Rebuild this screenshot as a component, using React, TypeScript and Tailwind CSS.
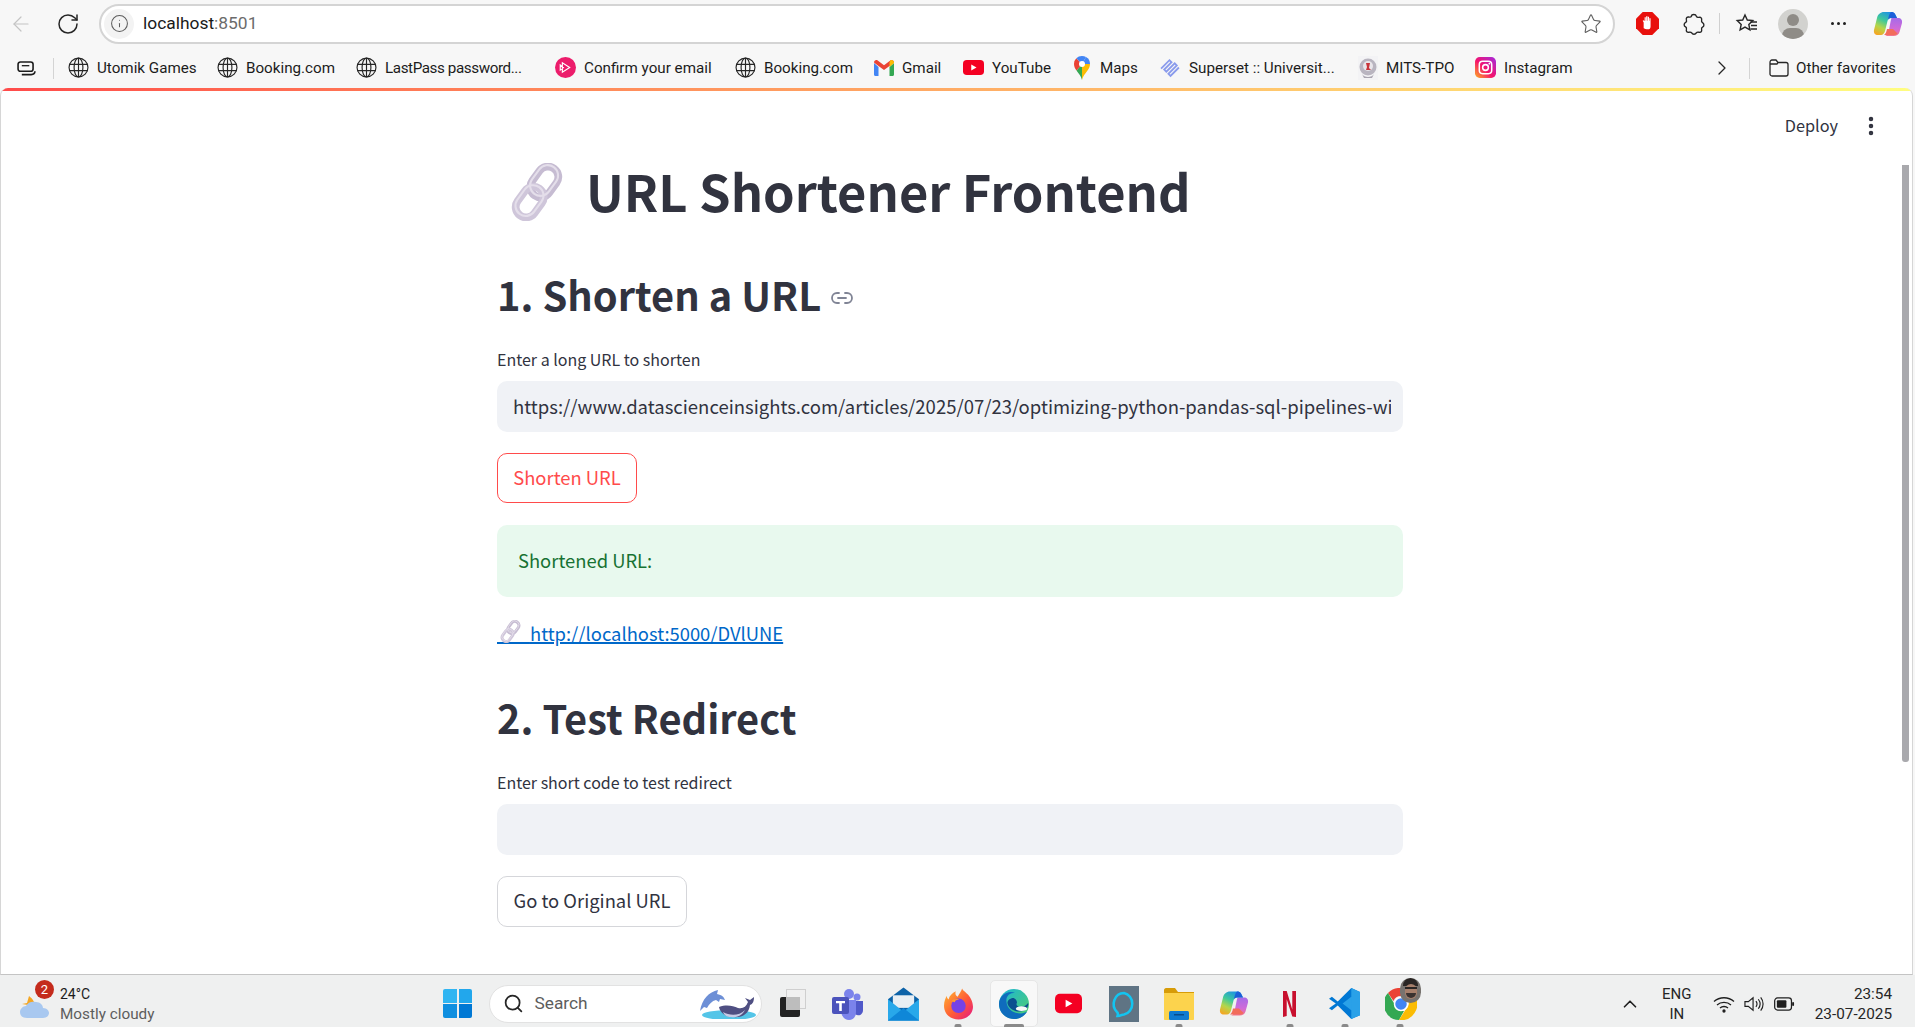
import React from "react";
import { ArrowLeft, RotateCw, Info, Star, MoreVertical, ChevronRight, ChevronUp, Search, Link2 } from "lucide-react";

const ChainEmoji = ({ className }: { className: string }) => (
  <svg viewBox="0 0 56 56" className={`inline-block ${className}`} fill="none">
    <g transform="rotate(36 28 28)">
      <rect x="18" y="0" width="20" height="32" rx="10" stroke="#c6bcd2" strokeWidth="7.500" />
      <rect x="18" y="24" width="20" height="32" rx="10" stroke="#cfc6da" strokeWidth="7.500" />
      <rect x="17" y="-1" width="20" height="32" rx="10" stroke="#e4deea" strokeWidth="2" />
      <rect x="17" y="23" width="20" height="32" rx="10" stroke="#e4deea" strokeWidth="2" />
    </g>
  </svg>
);

const Globe = () => (
  <svg viewBox="0 0 20 20" className="w-[21px] h-[21px]" fill="none" stroke="#262626" strokeWidth="1.1">
    <circle cx="10" cy="10" r="9" />
    <ellipse cx="10" cy="10" rx="4.2" ry="9" />
    <path d="M10 1v18M1.2 7h17.6M1.2 13h17.6" />
  </svg>
);

const Pluralsight = () => (
  <svg viewBox="0 0 20 20" className="w-[21px] h-[21px]">
    <circle cx="10" cy="10" r="10" fill="#ec1c6b" />
    <path d="M7 5.500v9l7-4.500zM5 7.500v5l3-2.500z" fill="none" stroke="#fff" strokeWidth="1.1" />
  </svg>
);
const Gmail = () => (
  <svg viewBox="0 0 20 16" className="w-[20px] h-[16px]">
    <path d="M0 3v11.500c0 .8.6 1.500 1.400 1.500H4.500V7z" fill="#4285f4" />
    <path d="M15.500 7v9h3.100c.8 0 1.400-.7 1.400-1.500V3z" fill="#34a853" />
    <path d="M0 2.500 4.500 6 10 10l5.500-4 4.500-3.500C20 .5 17.800-.6 16.300.6L10 5.300 3.700.6C2.200-.6 0 .5 0 2.500z" fill="#ea4335" />
    <path d="M15.500 7V2.600l.8-2C17.800-.6 20 .5 20 2.500V3z" fill="#fbbc04" />
  </svg>
);
const YouTubeIcon = ({ className }: { className: string }) => (
  <svg viewBox="0 0 28 20" className={className}>
    <rect width="28" height="20" rx="5" fill="#f40022" />
    <path d="M11 6v8l7-4z" fill="#fff" />
  </svg>
);
const MapsPin = () => (
  <svg viewBox="0 0 16 24" className="w-[16px] h-[24px]">
    <path d="M8 24c-1-4-3-6-5.500-9.500L8 8z" fill="#34a853" />
    <path d="M8 24c1-4 3-6 5.500-9.500C15 12.500 16 10.500 16 8L8 8z" fill="#fbbc04" />
    <path d="M2.300 2.300A8 8 0 0 0 0 8c0 2.500 1 4.500 2.500 6.500L8 8z" fill="#ea4335" />
    <path d="M2.300 2.300A8 8 0 0 1 8 0c1.500 0 2.800.4 4 1L8 8z" fill="#4285f4" />
    <path d="M12 1a8 8 0 0 1 4 7H8z" fill="#4285f4" />
    <circle cx="8" cy="8" r="3" fill="#fff" />
  </svg>
);
const Superset = () => (
  <svg viewBox="0 0 20 20" className="w-[21px] h-[21px]" fill="none" stroke="#8a9bec" strokeWidth="1.700">
    <path d="M1 11 9 3l2 2-7 7 2 2 8-8 2 2-8 8 2 2 8-8" />
  </svg>
);
const Mits = () => (
  <svg viewBox="0 0 20 24" className="w-[20px] h-[24px]">
    <rect width="20" height="24" fill="#f3f3f5" />
    <circle cx="10" cy="11" r="8.500" fill="#b9b5c0" />
    <path d="M4 18c2 4 10 4 12 0l-2 4H6z" fill="#a8a4b0" />
    <circle cx="10" cy="10" r="5" fill="#e9e6ea" />
    <path d="M8 7h4l-1 5 2 2H8l1-3z" fill="#c8343a" />
  </svg>
);
const Instagram = () => (
  <svg viewBox="0 0 22 22" className="w-[21px] h-[21px]">
    <defs>
      <linearGradient id="ig" x1="0" y1="1" x2="1" y2="0">
        <stop offset="0" stopColor="#fdb022" />
        <stop offset=".45" stopColor="#f5136d" />
        <stop offset="1" stopColor="#a12be0" />
      </linearGradient>
    </defs>
    <rect width="22" height="22" rx="5" fill="url(#ig)" />
    <rect x="4.500" y="4.500" width="13" height="13" rx="3.500" fill="none" stroke="#fff" strokeWidth="1.600" />
    <circle cx="11" cy="11" r="3" fill="none" stroke="#fff" strokeWidth="1.600" />
    <circle cx="15" cy="7" r=".9" fill="#fff" />
  </svg>
);

const bookmarks = [
  { label: "Utomik Games", icon: <Globe />, cls: "w-[149px]", text: "" },
  { label: "Booking.com", icon: <Globe />, cls: "w-[139px]", text: "" },
  { label: "LastPass password...", icon: <Globe />, cls: "w-[199px]", text: "tracking-[-0.400px]" },
  { label: "Confirm your email", icon: <Pluralsight />, cls: "w-[180px]", text: "" },
  { label: "Booking.com", icon: <Globe />, cls: "w-[138px]", text: "" },
  { label: "Gmail", icon: <Gmail />, cls: "w-[90px]", text: "" },
  { label: "YouTube", icon: <YouTubeIcon className="w-[21px] h-[15px]" />, cls: "w-[108px]", text: "" },
  { label: "Maps", icon: <MapsPin />, cls: "w-[89px]", text: "" },
  { label: "Superset :: Universit...", icon: <Superset />, cls: "w-[197px]", text: "" },
  { label: "MITS-TPO", icon: <Mits />, cls: "w-[118px]", text: "" },
  { label: "Instagram", icon: <Instagram />, cls: "w-[90px]", text: "" },
];

const Copilot = ({ className, id }: { className: string; id: string }) => (
  <svg viewBox="0 0 30 30" className={className}>
    <defs>
      <linearGradient id={`${id}a`} x1="0.7" y1="0" x2="0.2" y2="1">
        <stop offset="0" stopColor="#1b8fe8" />
        <stop offset=".4" stopColor="#3fc99a" />
        <stop offset=".7" stopColor="#b5d64a" />
        <stop offset="1" stopColor="#f5a623" />
      </linearGradient>
      <linearGradient id={`${id}b`} x1="0.5" y1="0" x2="0.5" y2="1">
        <stop offset="0" stopColor="#a56be8" />
        <stop offset=".6" stopColor="#d06ad8" />
        <stop offset="1" stopColor="#f5768a" />
      </linearGradient>
    </defs>
    <path d="M11 3h7c2 0 3 .5 4 2l2 4h-6c-2 0-3 1-3.500 3L12 22c-.5 2-2 4-4 4H5c-3 0-4.500-2-4-5l3-12c.7-3.500 3.500-6 7-6z" fill={`url(#${id}a)`} />
    <path d="M18 9h7c3 0 4.500 2 4 5l-2.500 9c-.7 2.500-3 4-6 4h-9c2 0 3.500-2 4-4l2-10c.4-2.500 1.500-4 .5-4z" fill={`url(#${id}b)`} />
    <path d="M11 26h9c2 0 3.500-.5 4.500-1.500L20 20h-6c-.5 3-1.500 5-3 6z" fill="#f26d5b" />
    <path d="M18 3c2 0 3 .5 4 2l2 4h-6c-1.500 0-2.500 1-3 2 .5-3 1-6 3-8z" fill="#1c5fd8" />
  </svg>
);

const Teams = () => (
  <svg viewBox="0 0 32 32" className="w-[32px] h-[32px]">
    <circle cx="25" cy="9" r="3.500" fill="#7b83eb" />
    <circle cx="17" cy="6" r="5" fill="#7b83eb" />
    <path d="M21 13h10v9c0 4-3 6-6 5-2-.5-4-2-4-5z" fill="#5059c9" />
    <path d="M9 12h15v12c0 5-3 8-7 8s-7-3-8-8z" fill="#7b83eb" />
    <rect x="0" y="9" width="17" height="17" rx="2" fill="#4b53bc" />
    <path d="M4 13h9v2.200H9.800V23H7.200v-7.800H4z" fill="#fff" />
  </svg>
);
const Mail = () => (
  <svg viewBox="0 0 32 34" className="w-[31px] h-[34px]">
    <path d="M16 0 32 12v22H0V12z" fill="#0b62a8" />
    <path d="M5 8h22v13H5z" fill="#e8eef3" />
    <path d="M0 12 16 25 32 12v22H0z" fill="#28a8ea" />
    <path d="M0 34 16 21l16 13z" fill="#0f87d8" />
  </svg>
);
const Firefox = () => (
  <svg viewBox="0 0 32 34" className="w-[29px] h-[32px]">
    <defs>
      <linearGradient id="ff" x1="0" y1="0" x2="1" y2="1">
        <stop offset="0" stopColor="#ffbd2e" />
        <stop offset=".55" stopColor="#ff5a36" />
        <stop offset="1" stopColor="#e31587" />
      </linearGradient>
    </defs>
    <path d="M20 0c1 3 6 5 9 10 3 5 3 10 3 10 0 8-7 14-16 14S0 28 0 19c0-5 2-9 3-11 0 2 1 3 2 4 1-4 4-7 8-9-1 3 0 5 2 6 2-3 4-6 5-9z" fill="url(#ff)" />
    <circle cx="16" cy="19" r="8" fill="#7542e5" />
    <path d="M8 14c2-2 5-3 9-2-3 0-5 1-5 3z" fill="#ff9a2e" />
  </svg>
);
const Edge = () => (
  <svg viewBox="0 0 32 32" className="w-[30px] h-[30px]">
    <defs>
      <linearGradient id="ed" x1="0" y1="0" x2="1" y2="1">
        <stop offset="0" stopColor="#19b5d8" />
        <stop offset="1" stopColor="#54cf6b" />
      </linearGradient>
    </defs>
    <circle cx="16" cy="16" r="16" fill="url(#ed)" />
    <path d="M0 16C0 7 9 1 17 4c-6 0-10 4-9 10 .6 7 7 12 15 12 3 0 5-1 7-2-3 5-8 8-14 8C7 32 0 25 0 16z" fill="#0f6cbd" />
    <path d="M9 15c1 5 6 9 12 9 4 0 7-1 9-4 .8-1.500 1.500-3 1-5-2 3-5 4-8 4-3.500 0-5-2-4-4 1-1.500-2-7-6-5-3 1-4 3-4 5z" fill="#0b4f8f" />
    <ellipse cx="24" cy="21" rx="6" ry="2.500" fill="#f8f8f8" />
  </svg>
);
const AlexaIcon = () => (
  <svg viewBox="0 0 30 36" className="w-[30px] h-[36px]">
    <rect width="30" height="36" fill="#5f7484" />
    <path d="M15 7a10.500 11 0 0 0-7 19c1.500 1.300 1 2.500.5 4 4 0 3.500-1.500 6.500-1.500A10.500 11 0 0 0 15 7z" fill="none" stroke="#13c4f0" strokeWidth="2.500" />
  </svg>
);
const Explorer = () => (
  <svg viewBox="0 0 30 32" className="w-[30px] h-[32px]">
    <path d="M0 2c0-1 1-2 2-2h9l3 4h16v6H0z" fill="#d79c08" />
    <path d="M0 5h30v26c0 .6-.4 1-1 1H1c-.6 0-1-.4-1-1z" fill="#fcd34d" />
    <rect x="5" y="23" width="20" height="9" rx="1.500" fill="#0f7bd0" />
    <rect x="10" y="26" width="10" height="1.500" fill="#084c8a" />
  </svg>
);
const Netflix = () => (
  <svg viewBox="0 0 14 28" className="w-[13px] h-[28px]">
    <path d="M0 0h4l6 20V0h4v28l-4-.6L4 9v18l-4 1z" fill="#c8102e" />
  </svg>
);
const VSCode = () => (
  <svg viewBox="0 0 32 32" className="w-[31px] h-[31px]">
    <path d="M23 0 32 4v24l-9 4L9 18l-6 5-3-2 7-5-7-5 3-2 6 5z" fill="#0078d4" />
    <path d="M23 0 32 4v24l-9 4zM23 9l-9 7 9 7z" fill="#2aa1e8" fillRule="evenodd" />
  </svg>
);
const Chrome = () => (
  <div className="relative w-[30px] h-[36px]">
    <svg viewBox="0 0 32 32" className="absolute left-0 top-[2px] w-[32px] h-[32px]">
      <path d="M16 0a16 16 0 0 1 14 8H16a8 8 0 0 0-7.500 5L3 5A16 16 0 0 1 16 0z" fill="#ea4335" />
      <path d="M3 5l7 12a8 8 0 0 0 9 6l-5 9A16 16 0 0 1 3 5z" fill="#34a853" />
      <path d="M30 8a16 16 0 0 1-16 24l7-11a8 8 0 0 0-1-13z" fill="#fbbc04" />
      <circle cx="16" cy="16" r="6.500" fill="#4285f4" stroke="#fff" strokeWidth="1.500" />
    </svg>
    <div className="absolute left-[15px] top-[-8px] w-[21px] h-[25px] rounded-full bg-[#77736f] overflow-hidden">
      <div className="absolute left-[3px] top-0 w-[15px] h-[8px] rounded-t-full bg-[#2a2624]" />
      <div className="absolute left-[5px] top-[6px] w-[12px] h-[15px] rounded-full bg-[#a67f6b]" />
      <div className="absolute left-[5px] top-[9px] w-[12px] h-[2px] bg-[#2a2624]" />
      <div className="absolute left-[6px] top-[15px] w-[10px] h-[5px] rounded-b-full bg-[#3a3230]" />
    </div>
  </div>
);

const taskIcons = [
  { el: <Teams />, dot: "" },
  { el: <Mail />, dot: "" },
  { el: <Firefox />, dot: "w-[7px]" },
  { el: <Edge />, dot: "w-[20px]", active: true },
  { el: <YouTubeIcon className="w-[27px] h-[25px]" />, dot: "" },
  { el: <AlexaIcon />, dot: "" },
  { el: <Explorer />, dot: "w-[7px]" },
  { el: <Copilot id="cpt" className="w-[30px] h-[33px]" />, dot: "" },
  { el: <Netflix />, dot: "w-[7px]" },
  { el: <VSCode />, dot: "w-[7px]" },
  { el: <Chrome />, dot: "w-[7px]" },
];

const Whale = () => (
  <svg viewBox="0 0 58 30" className="w-[58px] h-[30px]">
    <ellipse cx="30" cy="26" rx="27" ry="5" fill="#54c5e8" />
    <path d="M1 22C3 10 10 3 19 1l-1 4c5 1 7 3 8 6l-5-1-1 3-3-2c-4 1-7 4-9 8l-3-1z" fill="#6d8fd6" />
    <path d="M20 18c8-3 14-1 19 1 5 1 8-1 10-6l-3-4 5 2 4-3c0 4-1 7-4 8-1 9-8 13-17 12-7 0-13-4-14-10z" fill="#4f4f82" />
    <path d="M24 23c7 4 16 4 22-2-3 6-9 8-14 7-4 0-7-2-8-5z" fill="#c7cbe6" />
  </svg>
);

const textStyle = "[font-family:'Noto_Sans_CJK_SC','Noto_Sans',sans-serif]";

export default function App() {
  return (
    <div className="h-screen w-full overflow-hidden flex flex-col bg-[#f7f7f7] [font-family:Roboto,sans-serif] text-[#1f1f1f]">
      {/* toolbar */}
      <div className="h-[46px] pt-[1px] flex items-center shrink-0">
        <div className="w-[42px] flex justify-center"><ArrowLeft className="w-[24px] h-[24px] text-[#c4c4c4]" strokeWidth={1.200} /></div>
        <div className="ml-[5px] w-[42px] flex justify-center"><RotateCw className="w-[24px] h-[24px] text-[#262626]" strokeWidth={1.500} /></div>
        <div className="ml-[10px] w-[1516px] h-[40px] rounded-full bg-white border-2 border-[#d4d4d4] flex items-center">
          <div className="ml-[3px] w-[30px] h-[30px] rounded-full bg-[#f3f3f3] flex items-center justify-center"><Info className="w-[19px] h-[19px] text-[#5c5c5c]" strokeWidth={1.300} /></div>
          <span className="ml-[9px] text-[17.400px] text-[#1a1a1a]">localhost<span className="text-[#6b6b6b]">:8501</span></span>
          <div className="ml-auto mr-[11px]"><Star className="w-[22px] h-[22px] text-[#5f5f5f]" strokeWidth={1.200} /></div>
        </div>
        <div className="ml-[19px] w-[26px] h-[26px] flex items-center justify-center">
          <svg viewBox="0 0 24 24" className="w-[23px] h-[23px]">
            <path d="M7 0h10l7 7v10l-7 7H7l-7-7V7z" fill="#e8100c" />
            <path d="M8 17v-6l-1-2 1-.5 1 1V5.500h1.200V9h.4V4.500h1.300V9h.4V5h1.300v4h.4V6.500h1.200V15c0 2-1 3-3 3h-1c-1 0-2-.3-3-1z" fill="#fff" />
          </svg>
        </div>
        <div className="ml-[21px] w-[26px] flex justify-center">
          <svg viewBox="0 0 24 24" className="w-[22px] h-[22px]" fill="none" stroke="#262626" strokeWidth="1.500">
            <path d="M9 3.500c.5-2.500 5-2.500 5.500 0 .2 1 1.500 1.500 3 1.200 2-.4 3.300 1 2.800 3-.3 1.300 0 2.300 1 2.800 2 1 2 4 0 5-1 .5-1.300 1.500-1 2.800.5 2-.8 3.200-2.800 2.700-1.500-.4-2.500 0-3 .7-1 2-4 2-5 0-.5-.7-1.500-1-3-.7-2 .4-3.300-1-2.800-2.800.3-1.500 0-2.500-.8-3-2.200-1-2.200-4 0-5 1-.5 1.200-1.500.8-2.800-.5-2 .8-3.500 2.800-3 1.500.3 2.300 0 2.700-.9z" />
          </svg>
        </div>
        <div className="ml-[12px] w-px h-[21px] bg-[#d0d0d0]" />
        <div className="ml-[14px] w-[26px] flex justify-center">
          <svg viewBox="0 0 24 24" className="w-[24px] h-[24px]" fill="none" stroke="#262626" strokeWidth="1.400">
            <path d="M10 3l2.300 5 5.500.6-4 3.800 1.100 5.500-4.900-2.800-4.900 2.800 1.100-5.500-4-3.800 5.500-.6z" />
            <path d="M15.500 10H22M16 13.500h6M15.500 17H22" />
          </svg>
        </div>
        <div className="ml-[18px] w-[30px] h-[30px] rounded-full bg-[#d2d2cf] relative overflow-hidden">
          <div className="absolute left-[9px] top-[5px] w-[12px] h-[12px] rounded-full bg-[#8f8c87]" />
          <div className="absolute left-[4px] top-[19px] w-[22px] h-[16px] rounded-full bg-[#8f8c87]" />
        </div>
        <div className="ml-[23px] flex gap-[3px]">
          <span className="w-[3px] h-[3px] rounded-full bg-[#1f1f1f]" />
          <span className="w-[3px] h-[3px] rounded-full bg-[#1f1f1f]" />
          <span className="w-[3px] h-[3px] rounded-full bg-[#1f1f1f]" />
        </div>
        <div className="ml-[27px]"><Copilot id="cpb" className="w-[30px] h-[30px]" /></div>
      </div>

      {/* bookmarks */}
      <div className="h-[42px] pt-[2px] flex items-center shrink-0 text-[15.200px] text-[#1c1c1c]">
        <div className="w-[53px] pl-[17px]">
          <svg viewBox="0 0 20 16" className="w-[19px] h-[15px]" fill="none" stroke="#1c1c1c" strokeWidth="1.700">
            <rect x="1" y="1" width="16" height="10" rx="2.500" />
            <path d="M5 14.500h10c2 0 4-1 4-3.500" />
            <path d="M5 5h8" strokeWidth="1.400" />
          </svg>
        </div>
        <div className="w-px h-[21px] bg-[#d4d4d4]" />
        <div className="ml-[14px] flex items-center">
          {bookmarks.map((b, i) => (
            <div key={i} className={`flex items-center gap-[8px] ${b.cls}`}>
              <span className="w-[21px] flex justify-center shrink-0">{b.icon}</span>
              <span className={`whitespace-nowrap ${b.text}`}>{b.label}</span>
            </div>
          ))}
        </div>
        <div className="ml-[145px]"><ChevronRight className="w-[24px] h-[24px] text-[#262626]" strokeWidth={1.300} /></div>
        <div className="ml-[15px] w-px h-[21px] bg-[#d4d4d4]" />
        <div className="ml-[19px] flex items-center gap-[7px]">
          <svg viewBox="0 0 20 18" className="w-[20px] h-[18px]" fill="none" stroke="#262626" strokeWidth="1.300">
            <path d="M1 3.500C1 2 2 1 3 1h4l2 2.500h8c1 0 2 1 2 2V15c0 1-1 2-2 2H3c-1 0-2-1-2-2z" />
            <path d="M1 5h7l1-1.500" />
          </svg>
          <span className="whitespace-nowrap">Other favorites</span>
        </div>
      </div>

      {/* page */}
      <div className="relative flex-1 min-h-0 overflow-hidden mr-[2px] bg-white rounded-t-[8px] border-l border-b border-r border-[#d6d6d6] border-b-[#c4c4c4]">
        <div className="h-[3px] bg-gradient-to-r from-[#ff4b4b] to-[#fffd80]" />
        <div className={`${textStyle} text-[#31333f]`}>
          <div className="h-[70px] flex items-center justify-end pr-[29px] text-[16.300px]">
            <span className="mb-[2px]">Deploy</span>
            <MoreVertical className="ml-[21px] w-[24px] h-[24px] text-[#31333f]" strokeWidth={2.500} />
          </div>
          <div className="ml-[496px] w-[906px]">
            <h1 className="pl-[11px] h-[58px] flex items-center text-[50.600px] font-bold leading-none whitespace-nowrap">
              <ChainEmoji className="mt-[3px] w-[58px] h-[58px]" />
              <span className="ml-[20px]">URL Shortener Frontend</span>
            </h1>
            <h2 className="mt-[48px] h-[54px] flex items-center text-[39.800px] font-semibold leading-none whitespace-nowrap">
              1. Shorten a URL
              <Link2 className="ml-[9px] mt-[7px] w-[24px] h-[24px] text-[#808495]" strokeWidth={1.800} />
            </h2>
            <label className="mt-[27px] block h-[22px] leading-[22px] text-[16px]">Enter a long URL to shorten</label>
            <input
              readOnly
              value="https://www.datascienceinsights.com/articles/2025/07/23/optimizing-python-pandas-sql-pipelines-with-best-practices"
              className="mt-[11px] block w-full h-[51px] rounded-[10px] bg-[#f0f2f6] pl-[16px] pr-[12px] pb-[2px] text-[18.500px] text-[#31333f] outline-none"
            />
            <button className="mt-[21px] block w-[140px] h-[50px] rounded-[10px] border border-[#ff4b4b] bg-white text-[#ff4b4b] text-[18.400px]">Shorten URL</button>
            <div className="mt-[22px] h-[72px] rounded-[10px] bg-[#e8f9ee] pl-[21px] pb-[1px] flex items-center text-[18.400px] text-[#177233]">Shortened URL:</div>
            <div className="mt-[21px] h-[30px] leading-[30px] text-[18.400px] whitespace-nowrap">
              <a href="#" className="relative underline decoration-[1.500px] text-[#0068c9]">
                {"\u00A0\u00A0\u00A0\u00A0\u00A0\u00A0\u00A0 "}http://localhost:5000/DVlUNE
                <ChainEmoji className="absolute left-[2px] top-[0px] w-[23px] h-[23px]" />
              </a>
            </div>
            <h2 className="mt-[42px] h-[54px] flex items-center text-[39.800px] font-semibold leading-none whitespace-nowrap">2. Test Redirect</h2>
            <label className="mt-[27px] block h-[22px] leading-[22px] text-[16px]">Enter short code to test redirect</label>
            <div className="mt-[11px] w-full h-[51px] rounded-[10px] bg-[#f0f2f6]" />
            <button className="mt-[21px] block w-[190px] h-[51px] rounded-[10px] border border-[#d5d6da] bg-white text-[#31333f] text-[18.400px] pb-[1px]">Go to Original URL</button>
          </div>
        </div>
        <div className="absolute right-[3px] top-[77px] w-[7px] h-[597px] rounded-b-[3px] bg-[#a9a9ad]" />
      </div>

      {/* taskbar */}
      <div className="h-[52px] pt-[5px] shrink-0 bg-[#eff0f0] flex items-center relative text-[15px]">
        <div className="ml-[19px] w-[34px] h-[34px] relative">
          <svg viewBox="0 0 34 34" className="w-[34px] h-[34px]">
            <path d="M3 17l5-1 2-7c4 3 6 6 5 10z" fill="#f4a623" />
            <path d="M8 31c-5 0-7-3-7-6s3-6 6-6c2-4 6-5 10-4 4 0 7 3 7 6 4 0 6 3 6 5 0 3-3 5-6 5z" fill="#a8c8f0" />
          </svg>
          <div className="absolute left-[16px] top-[-7px] w-[19px] h-[19px] rounded-full bg-[#c42b1c] text-white text-[13px] leading-[19px] text-center">2</div>
        </div>
        <div className="ml-[7px] flex flex-col leading-[20px]">
          <span className="text-[14px] text-[#1c1c1c]">24°C</span>
          <span className="text-[15.300px] text-[#5d5d5d]">Mostly cloudy</span>
        </div>
        <div className="ml-[289px] grid grid-cols-2 gap-[1.500px] w-[29px] h-[29px]">
          <span className="bg-[#30b5f2] rounded-tl-[2px]" />
          <span className="bg-[#22a7ec] rounded-tr-[2px]" />
          <span className="bg-[#0f8fe0] rounded-bl-[2px]" />
          <span className="bg-[#0078d4] rounded-br-[2px]" />
        </div>
        <div className="ml-[17px] w-[273px] h-[38px] rounded-full bg-white border border-[#e2e2e2] flex items-center relative">
          <Search className="ml-[13px] w-[21px] h-[21px] text-[#262626]" strokeWidth={2} />
          <span className="ml-[10px] mt-[1px] text-[17.300px] text-[#5d5d5d]">Search</span>
          <div className="ml-auto mr-[4px]"><Whale /></div>
        </div>
        <div className="ml-[18px] w-[26px] h-[24px] relative mt-[3px]">
          <div className="absolute left-[6px] top-[-4px] w-[20px] h-[20px] bg-[#f0f0f0] border border-[#cfcfcf]" />
          <div className="absolute left-0 top-[4px] w-[20px] h-[20px] bg-[#222] rounded-[2px]" />
          <div className="absolute left-[6px] top-[4px] w-[14px] h-[13px] bg-[#bdbdbd]" />
        </div>
        <div className="ml-[14px] flex items-center -mt-[5px]">
          {taskIcons.map((t, i) => (
            <div key={i} className="relative w-[55.200px] h-[52px] flex items-center justify-center">
              {t.active && <span className="absolute left-[3.500px] right-[3.500px] top-[5px] bottom-0 rounded-[5px] bg-[#f8f8f8] border border-[#e6e6e6]" />}
              <span className="relative mt-[5px] flex items-center justify-center">{t.el}</span>
              {t.dot && <span className={`absolute bottom-0 left-1/2 -translate-x-1/2 h-[3px] rounded-t-[2px] bg-[#8a8a8a] ${t.dot}`} />}
            </div>
          ))}
        </div>
        <div className="ml-auto flex items-center">
          <ChevronUp className="w-[22px] h-[22px] text-[#1f1f1f]" strokeWidth={1.800} />
          <div className="ml-[11px] w-[50px] flex flex-col items-center leading-[20px] text-[15px] text-[#262626]"><span>ENG</span><span>IN</span></div>
          <svg viewBox="0 0 22 18" className="ml-[11px] w-[22px] h-[18px]" fill="none" stroke="#1f1f1f" strokeWidth="1.300">
            <path d="M1 6.500c5.500-5 14.500-5 20 0M4 10c3.800-3.500 10.200-3.500 14 0M7 13c2.200-2 5.800-2 8 0" />
            <circle cx="11" cy="16" r="1" fill="#1f1f1f" />
          </svg>
          <svg viewBox="0 0 22 18" className="ml-[9px] w-[21px] h-[18px]" fill="none" stroke="#1f1f1f" strokeWidth="1.200">
            <path d="M1 6.500h3.500L9.500 2.500v13l-5-4H1zM12.500 6c1.300 1.700 1.300 4.300 0 6M15 4c2.300 3 2.300 7 0 10M17.500 2c3.300 4 3.300 10 0 14" />
          </svg>
          <svg viewBox="0 0 22 14" className="ml-[9px] w-[21px] h-[14px]">
            <rect x=".7" y=".7" width="17.600" height="12.600" rx="3" fill="none" stroke="#1f1f1f" strokeWidth="1.300" />
            <rect x="3" y="3" width="10" height="8" rx="1" fill="#1f1f1f" />
            <rect x="19" y="5" width="2" height="4" rx="1" fill="#1f1f1f" />
          </svg>
          <div className="ml-[20px] mr-[23px] flex flex-col items-end leading-[20px] text-[15.300px] text-[#262626]"><span>23:54</span><span>23-07-2025</span></div>
        </div>
      </div>
    </div>
  );
}
